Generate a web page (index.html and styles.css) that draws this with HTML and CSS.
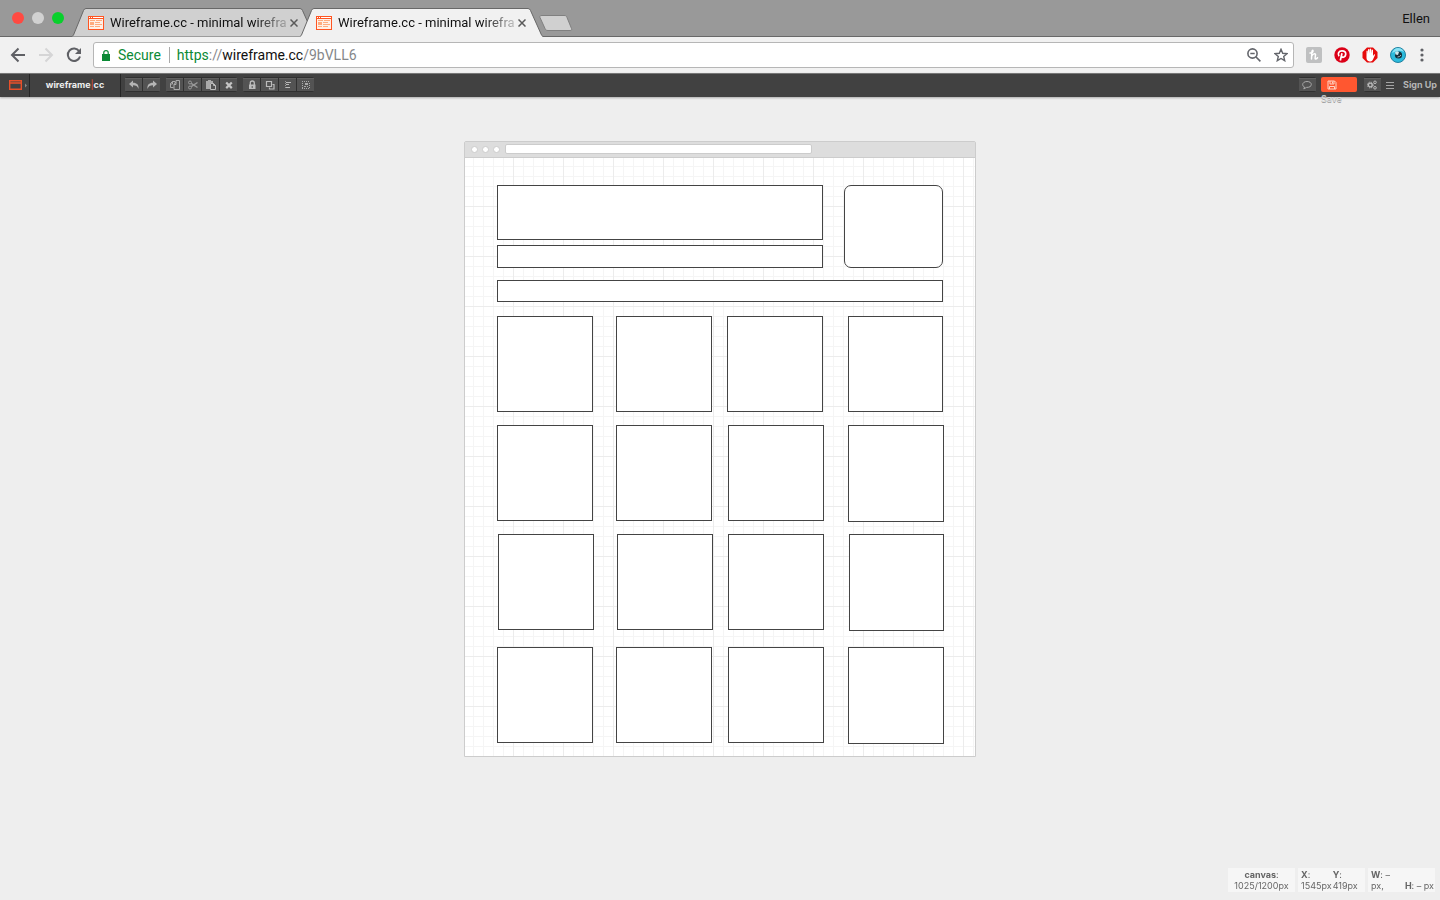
FILE: index.html
```html
<!DOCTYPE html>
<html lang="en">
<head>
<meta charset="utf-8">
<title>Wireframe.cc - minimal wireframing tool</title>
<link rel="stylesheet" href="styles.css">
</head>
<body>
<svg class="defs" width="0" height="0" aria-hidden="true">
  <symbol id="favicon" viewBox="0 0 16 14">
    <path fill="#ff5522" d="M0 0h16v14H0z"/><path fill="#fff0e6" d="M1 3h14v10H1z"/>
    <path fill="#fff" d="M1 1h1v1H1zM3 1h1v1H3zM5 1h10v1H5z"/>
    <path fill="#ffab7d" d="M2 4h5v1H2zM2 6h4v3H2zM8 4h6v1H8zM7 6h5v1H7zM7 8h7v1H7zM2 10h4v1H2zM7 10h5v1H7z"/>
  </symbol>
  <symbol id="tab" viewBox="0 0 243 29">
    <path stroke="#686868" d="M0 28.500L1.500 27L11.500 2.500Q12.300.5 14 .5H228Q229.700.5 230.500 2.500L241.500 27L243 28.500"/>
  </symbol>
  <symbol id="close" viewBox="0 0 8 8"><path fill="none" stroke="#5a5a5a" stroke-width="1.500" d="M.5.5l7 7M7.500.5l-7 7"/></symbol>
</svg>

<header class="tabstrip">
  <div class="lights"><button class="light red" aria-label="Close window"></button><button class="light gray" aria-label="Minimize"></button><button class="light green" aria-label="Full screen"></button></div>
  <div class="tab">
    <svg class="tab-shape"><use href="#tab"/></svg>
    <svg class="favicon"><use href="#favicon"/></svg>
    <span class="tab-title">Wireframe.cc - minimal wirefra</span>
    <button class="tab-close" aria-label="Close tab"><svg width="8" height="8"><use href="#close"/></svg></button>
  </div>
  <div class="tab active">
    <svg class="tab-shape"><use href="#tab"/></svg>
    <svg class="favicon"><use href="#favicon"/></svg>
    <span class="tab-title">Wireframe.cc - minimal wirefra</span>
    <button class="tab-close" aria-label="Close tab"><svg width="8" height="8"><use href="#close"/></svg></button>
  </div>
  <button class="new-tab" aria-label="New tab"><svg width="34" height="17" viewBox="0 0 34 17"><path fill="#d0d0d0" stroke="#808080" d="M3 .5H25C27 .5 27.500 1 28 2.500L32.500 13.500C33 15 32.500 15.500 31 15.500H9C7.500 15.500 6.500 15 6 13.500L1 2.500C.5 1 1 .5 3 .5Z"/></svg></button>
  <button class="profile">Ellen</button>
</header>

<nav class="navbar">
  <button aria-label="Back"><svg width="16" height="16" viewBox="0 0 16 16" fill="none" stroke="#5f6065" stroke-width="2"><path d="M15 8H2M8.500 1.500L2 8l6.500 6.500"/></svg></button>
  <button aria-label="Forward" disabled><svg width="16" height="16" viewBox="0 0 16 16" fill="none" stroke="#d5d5d6" stroke-width="2"><path d="M1 8h13M7.500 1.500L14 8l-6.500 6.500"/></svg></button>
  <button aria-label="Reload"><svg width="16" height="16" viewBox="0 0 16 16"><path fill="none" stroke="#5f6065" stroke-width="2" d="M13.200 4.300A6.200 6.200 0 1 0 14 9.500"/><path fill="#5f6065" d="M15 1v6H9z"/></svg></button>
  <div class="address">
    <svg width="8" height="11" viewBox="0 0 8 11"><path fill="#0b8a35" d="M0 4h8v7H0z"/><path fill="none" stroke="#0b8a35" stroke-width="1.200" d="M1.800 4V2.600a2.200 2 0 0 1 4.400 0V4"/></svg>
    <span class="secure">Secure</span>
    <div class="url"><span class="scheme">https</span>://<b>wireframe.cc</b>/9bVLL6</div>
    <button aria-label="Zoom"><svg width="14" height="14" viewBox="0 0 14 14" fill="none" stroke="#63656b" stroke-width="1.600"><circle cx="5.500" cy="5.500" r="4.600"/><path d="M3.300 5.500h4.400M8.800 8.800l4.600 4.600"/></svg></button>
    <button aria-label="Bookmark"><svg width="14" height="14" viewBox="0 0 14 14"><path fill="none" stroke="#63656b" stroke-width="1.400" d="M7 1.300l1.700 4 4.300.4-3.300 2.800 1 4.200L7 10.500l-3.700 2.200 1-4.200L1 5.700l4.300-.4z"/></svg></button>
  </div>
  <div class="extensions">
    <button aria-label="Honey"><svg width="16" height="16" viewBox="0 0 16 16"><rect width="16" height="16" rx="2" fill="#bfc0c1"/><path fill="none" stroke="#fff" stroke-width="1.500" stroke-linecap="round" d="M4 6c2 .3 3.300-1 3-2.300s-1.200.3-1.200 2.300L5.500 12M5.800 9c1-2.300 3.700-3 3.700-1.200 0 1.600-1 4.500.3 4.200q1-.3 1.700-1.300"/></svg></button>
    <button aria-label="Pinterest"><svg width="16" height="16" viewBox="0 0 16 16"><circle cx="8" cy="8" r="7.700" fill="#db0018"/><path fill="none" stroke="#fff" stroke-width="1.700" d="M5 9.200C3.500 7 4.500 3.800 8 3.800c2.800 0 4 1.800 3.700 3.700-.4 2.600-3 3.500-4.100 2M8 6.200L6.300 13.500"/></svg></button>
    <button aria-label="AdBlock"><svg width="16" height="16" viewBox="0 0 16 16"><path fill="#e60b0b" d="M5 .5h6L15.500 5v6L11 15.500H5L.5 11V5z"/><path fill="#fff" d="M4.500 8V4q.6-1 1.200 0l.3 3V2.500q.7-1 1.400 0V6.500L7.800 2q.8-1 1.400 0v4.500l.5-3.500q.8-.8 1.300 0v6l1-1.500q1.200-.5 1 .5l-2 4.500q-.8 1.800-2.500 2H7.500q-3-.6-3-3.500z"/></svg></button>
    <button aria-label="Eye"><svg width="16" height="16" viewBox="0 0 16 16"><circle cx="8" cy="8" r="7.500" fill="#2bbbdc" stroke="#2280a0"/><path fill="#8be3f4" d="M2 6Q4 1 8 1q4 .2 6 4-4-2-7-1Q4 5 2 6z"/><circle cx="8.500" cy="8" r="3.600" fill="#14303d"/><path fill="#cce9ee" d="M5 5.500Q7 3.500 9 5L8 8 5.500 7.500z"/><path stroke="#9ab6bc" fill="none" d="M7.500 10q2.500 0 3.500-2"/></svg></button>
    <button class="overflow" aria-label="Menu"><svg width="4" height="14" viewBox="0 0 4 14" fill="#5f6065"><circle cx="2" cy="2" r="1.600"/><circle cx="2" cy="7" r="1.600"/><circle cx="2" cy="12" r="1.600"/></svg></button>
  </div>
</nav>

<div class="toolbar">
  <button class="device" aria-label="Device"><svg width="19" height="10" viewBox="0 0 19 10"><path fill="none" stroke="#e9502a" stroke-width="1.400" d="M.7.7h11.600v8.600H.7zM1 3h11"/><path fill="#888" d="M16 3.500L18 5.500 16 7.500z"/></svg></button>
  <a class="brand" href="#">wireframe<span class="bar">|</span>cc</a>
  <div class="tools">
  <div class="group">
    <button aria-label="Undo"><svg viewBox="0 0 10 10"><path fill="#b5b5b5" d="M0 4L4 .5V2.800C8 2.800 10 5 9.500 9 8.500 6 7 5.200 4 5.200V7.500z"/></svg></button>
    <button aria-label="Redo"><svg viewBox="0 0 10 10"><path fill="#b5b5b5" d="M10 4L6 .5V2.800C2 2.800 0 5 .5 9 1.500 6 3 5.200 6 5.200V7.500z"/></svg></button>
  </div>
  <div class="group">
    <button aria-label="Copy"><svg viewBox="0 0 10 10"><path fill="none" stroke="#aaa" d="M3.500 7.500h-3v-4l2-2h2.500v1M.5 4h2V1.500M4 4.500L6 2V.5h3.500v9H4zM4 4.500h2V2"/></svg></button>
    <button aria-label="Cut"><svg viewBox="0 0 10 10"><g fill="none" stroke="#999"><circle cx="2" cy="2.500" r="1.500"/><circle cx="2" cy="7.500" r="1.500"/><path stroke-width="1.400" d="M3.200 3.300L9.500 7.500M3.200 6.700L9.500 2.500"/></g></svg></button>
    <button aria-label="Paste"><svg viewBox="0 0 10 10"><path fill="#aaa" d="M0 1h2V0h3v1h2v2H4v6H0z"/><path fill="none" stroke="#bbb" d="M4.500 3.500h3l2 2v4h-5zM7.500 3.500v2h2"/></svg></button>
    <button aria-label="Delete"><svg viewBox="0 0 10 10"><path stroke="#c4c4c4" stroke-width="2.200" d="M2.200 2.500l5.600 5.600M7.800 2.500L2.200 8.100"/></svg></button>
  </div>
  <div class="group">
    <button aria-label="Lock"><svg viewBox="0 0 10 10"><path fill="#bbb" d="M2 4.500h6.500V9H2z"/><path fill="none" stroke="#bbb" stroke-width="1.300" d="M3.300 5V3a2 2 0 0 1 4 0v2"/><path stroke="#555" d="M5.200 6v2"/></svg></button>
    <button aria-label="Order"><svg viewBox="0 0 10 10"><path fill="none" stroke="#bbb" stroke-width="1.200" d="M1.500 1.500h5v5h-5zM7.500 4.500h1.500v4.500h-4.500v-1.500"/></svg></button>
    <button aria-label="Align"><svg viewBox="0 0 10 10"><path stroke="#999" d="M2.500 1v8" stroke-dasharray="1 1"/><path stroke="#bbb" d="M3 2.500h5M3 4.500h3M3 7.500h4"/></svg></button>
    <button aria-label="Group"><svg viewBox="0 0 10 10"><path stroke="#aaa" stroke-dasharray="1 1" d="M1 1.500h8M1 8.500h8M1.500 3v5M8.500 3v5"/><path fill="#aaa" d="M4 3h3v2H4zM3 6h2v1H3zM6 6h1v1H6z"/></svg></button>
  </div>
  </div>
  <div class="actions">
    <div class="group"><button aria-label="Comments"><svg viewBox="0 0 10 10"><path fill="none" stroke="#aaa" d="M5 1.500C2.500 1.500.7 2.800.7 4.500S2 6.800 2.500 7L1.800 9 4.500 7.400C7.500 7.500 9.300 6.300 9.300 4.500S7.500 1.500 5 1.500z"/></svg></button></div>
    <button class="save"><svg viewBox="0 0 10 10"><path fill="none" stroke="#ffd5c5" d="M1 1h6.500L9 2.500V9H1zM3 1v3h4V1M2.500 9V6.500h5V9M5.500 1.500v2"/></svg><span class="save-label">Save</span></button>
    <div class="group"><button aria-label="Settings"><svg viewBox="0 0 10 10"><circle cx="3.300" cy="5" r="1.900" fill="none" stroke="#bbb" stroke-width="1.400"/><circle cx="3.300" cy="5" r="2.900" fill="none" stroke="#bbb" stroke-dasharray="1.200 1.100"/><g fill="none" stroke="#bbb"><circle cx="8" cy="2.300" r="1.300"/><circle cx="8" cy="7.800" r="1.300"/></g></svg></button></div>
    <button class="menu" aria-label="Menu"><svg width="8" height="8" viewBox="0 0 8 8"><path stroke="#a5a5a5" d="M0 1.500h8M0 4.500h8M0 7.500h8"/></svg></button>
    <a class="signup" href="#">Sign Up</a>
  </div>
</div>

<main class="workspace">
  <div class="paper">
    <div class="paper-head"><i></i><i></i><i></i><div class="paper-url"></div></div>
    <div class="canvas">
      <div class="box title"></div><div class="box subtitle"></div><div class="box photo"></div><div class="box strip"></div>
      <div class="box tile r1 c1"></div><div class="box tile r1 c2"></div><div class="box tile r1 c3 near"></div><div class="box tile r1 c4 narrow"></div>
      <div class="box tile r2 c1"></div><div class="box tile r2 c2"></div><div class="box tile r2 c3"></div><div class="box tile r2 c4 tall"></div>
      <div class="box tile r3 c1 far"></div><div class="box tile r3 c2 far"></div><div class="box tile r3 c3"></div><div class="box tile r3 c4 far narrow tall"></div>
      <div class="box tile r4 c1"></div><div class="box tile r4 c2"></div><div class="box tile r4 c3"></div><div class="box tile r4 c4 tall"></div>
    </div>
  </div>
</main>

<footer class="status">
  <div class="panel center"><div><b>canvas</b>:<br>1025/1200px</div></div>
  <div class="panel"><div class="coord"><b>X</b>:<br>1545px</div><div><b>Y</b>:<br>419px</div></div>
  <div class="panel spread"><div><b>W</b>: –<br>px,</div><div><b>H</b>: – px</div></div>
</footer>
</body>
</html>
```

FILE: styles.css
```css
* { box-sizing: border-box; }
body {
  margin: 0;
  min-height: 100vh;
  display: flex;
  flex-direction: column;
  background: #eee;
  font-family: Roboto, "Liberation Sans", sans-serif;
}
.defs { position: absolute; }
button { border: 0; padding: 0; margin: 0; background: none; font: inherit; color: inherit; display: flex; align-items: center; justify-content: center; }
svg { display: block; flex: none; }
a { color: inherit; text-decoration: none; }

.tabstrip {
  height: 37px;
  display: flex;
  align-items: flex-end;
  padding: 0 10px 0 12px;
  background: #999;
  border-bottom: 1px solid #686868;
}
.lights { display: flex; gap: 8px; width: 60px; align-self: center; }
.light { width: 12px; height: 12px; border-radius: 50%; }
.red { background: #ff4a42; }
.gray { background: #d1d1d1; }
.green { background: #08d02c; }
.tab {
  position: relative;
  width: 243px;
  height: 29px;
  margin-bottom: -1px;
  padding: 0 13px 0 16px;
  display: flex;
  align-items: center;
}
.tab-shape { position: absolute; left: 0; top: 0; width: 243px; height: 29px; fill: #d0d0d0; }
.active { margin-left: -15px; }
.active .tab-shape { fill: #f1f1f1; }
.active::after { content: ""; position: absolute; left: 1px; right: 1px; bottom: 0; height: 1px; background: #f1f1f1; }
.favicon { position: relative; width: 16px; height: 14px; }
.tab-title {
  position: relative;
  flex: 1;
  margin-left: 6px;
  white-space: nowrap;
  font-size: 13px;
  line-height: 20px;
  color: #111;
  mask-image: linear-gradient(to right, #000 82%, rgba(0, 0, 0, 0.2) 100%);
}
.tab-close { position: relative; width: 18px; height: 20px; }
.new-tab { margin: 0 0 4px -4px; }
.profile { margin-left: auto; align-self: center; font-size: 13px; color: #111; }

.navbar { height: 36px; display: flex; align-items: center; gap: 12px; padding: 0 16px 0 10px; background: #f1f1f1; }
.address {
  flex: 1;
  height: 26px;
  margin-left: -1px;
  padding: 0 5px 0 8px;
  display: flex;
  align-items: center;
  background: #fff;
  border: 1px solid #b6b6b6;
  border-radius: 3px;
  font-size: 14px;
  line-height: 20px;
}
.address button { margin-left: 13px; }
.secure { color: #0b8a35; margin-left: 8px; padding-right: 8px; border-right: 1px solid #aaa; line-height: 16px; }
.url { flex: 1; margin-left: 7px; color: #85878a; }
.url b { font-weight: 400; color: #111; }
.scheme { color: #0b8a35; }
.extensions { display: flex; gap: 12px; }
.overflow { margin-left: 2px; }

.toolbar {
  position: relative;
  height: 24px;
  display: flex;
  align-items: stretch;
  background: #414141;
  border-top: 1px solid #777;
  box-shadow: 0 1px 2px #aaa;
  font-family: Inter, "Liberation Sans", sans-serif;
  font-size: 9px;
  font-weight: 700;
}
.device { width: 30px; padding-left: 8px; border-right: 1px solid #252525; }
.device, .brand, .tools, .actions { padding-bottom: 2px; }
.brand { width: 91px; display: flex; align-items: center; justify-content: center; border-right: 1px solid #252525; color: #eee; }
.bar { color: #e9502a; font-weight: 400; }
.tools { display: flex; align-items: center; gap: 6px; margin-left: 4px; }
.group { display: flex; gap: 1px; padding: 1px 0; background: #303030; border-radius: 2px; }
.group button { width: 17px; height: 13px; background: #535353; border-top: 1px solid #606060; }
.group svg, .save svg { width: 10px; height: 10px; }
.actions { margin-left: auto; display: flex; align-items: center; }
.save { position: relative; width: 36px; height: 15px; margin: 0 7px 0 5px; padding-left: 6px; justify-content: flex-start; background: #ff5730; border-radius: 2px; }
.save-label { position: absolute; left: 0; top: 16px; font-weight: 400; line-height: 12px; color: #ddd; text-shadow: 0 1px 0 #999; }
.menu { margin: 0 9px 0 5px; }
.signup { color: #b5b5b5; padding-right: 3px; }

.workspace { flex: 1; padding: 44px 0; }
.paper { width: 512px; margin: 0 auto; border: 1px solid #ccc; border-radius: 2px 2px 0 0; background: #fff; }
.paper-head { height: 16px; display: flex; align-items: center; gap: 4px; padding: 0 0 1px 6px; background: #ddd; border-bottom: 1px solid #ccc; }
.paper-head i { width: 7px; height: 7px; border: 1px solid #ccc; border-radius: 50%; background: #fff; }
.paper-url { width: 307px; height: 10px; margin-left: 1px; border: 1px solid #ccc; border-radius: 2px; background: #fff; }
.canvas {
  position: relative;
  height: 598px;
  background:
    repeating-linear-gradient(to right, #ececec 0 1px, transparent 1px 50px) -2px 0 / 600px 100%,
    repeating-linear-gradient(to bottom, #ececec 0 1px, transparent 1px 50px) 0 -2px / 100% 650px,
    repeating-linear-gradient(to right, #f5f5f5 0 1px, transparent 1px 10px) -2px 0 / 600px 100%,
    repeating-linear-gradient(to bottom, #f5f5f5 0 1px, transparent 1px 10px) 0 -2px / 100% 650px;
}
.box { position: absolute; background: #fff; border: 1px solid #444; }
.title { left: 32px; top: 27px; width: 326px; height: 55px; }
.subtitle { left: 32px; top: 87px; width: 326px; height: 23px; }
.photo { left: 379px; top: 27px; width: 99px; height: 83px; border-radius: 7px; }
.strip { left: 32px; top: 122px; width: 446px; height: 22px; }
.tile { width: 96px; height: 96px; }
.r1 { top: 158px; }
.r2 { top: 267px; }
.r3 { top: 376px; }
.r4 { top: 489px; }
.c1 { left: 32px; }
.c2 { left: 151px; }
.c3 { left: 263px; }
.c4 { left: 383px; }
.c3.near { left: 262px; }
.c1.far { left: 33px; }
.c2.far { left: 152px; }
.c4.far { left: 384px; }
.narrow { width: 95px; }
.tall { height: 97px; }

.status { position: fixed; right: 5px; bottom: 8px; display: flex; gap: 3px; font: 9px/11px Inter, "Liberation Sans", sans-serif; color: #666; }
.panel { width: 67px; height: 24px; padding: 1px 3px; display: flex; gap: 1px; background: #f6f6f6; white-space: nowrap; }
.center { justify-content: center; text-align: center; }
.spread { justify-content: space-between; align-items: flex-end; padding: 1px 1px 1px 3px; }
```
